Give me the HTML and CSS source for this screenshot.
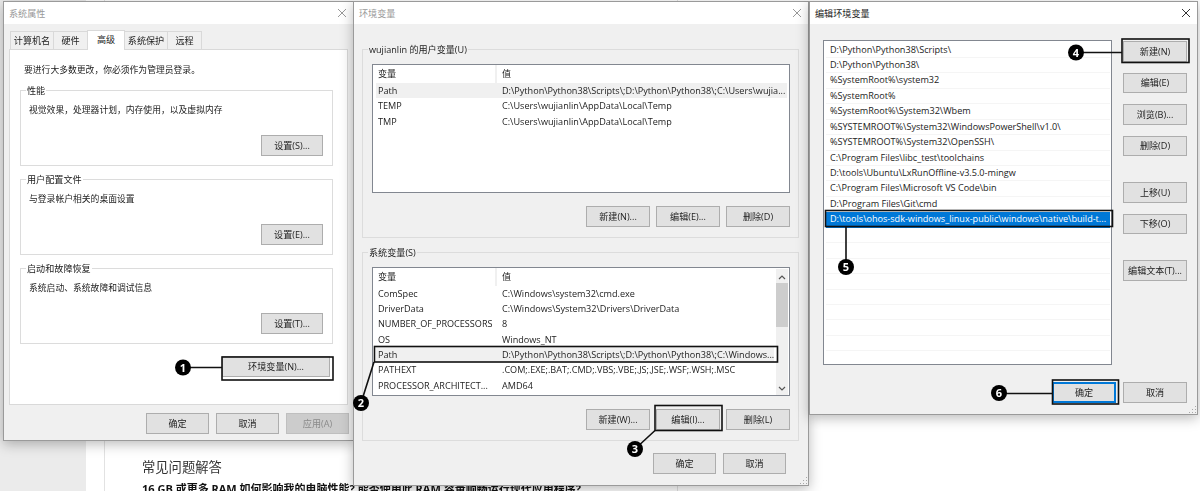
FILE: index.html
```html
<!DOCTYPE html>
<html lang="zh-CN">
<head>
<meta charset="utf-8">
<title>环境变量设置</title>
<link rel="stylesheet" href="styles.css">
</head>
<body>
<div class="desk">
  <div class="page">
    <div class="rail"></div>
    <div class="gutter"></div>
    <main class="article">
      <h2 class="faq-title">常见问题解答</h2>
      <p class="faq-q">16 GB 或更多 RAM 如何影响我的电脑性能? 能否使用此 RAM 容量顺畅运行现代应用程序?</p>
    </main>
    <div class="article-end"></div>
  </div>

  <section class="win win-sys">
    <header class="titlebar inactive"><span>系统属性</span><svg class="close" viewBox="0 0 10 10"><path d="M1 1l8 8M9 1l-8 8"/></svg></header>
    <div class="win-body">
      <nav class="tabs">
        <span class="tab t1">计算机名</span><span class="tab t2">硬件</span><span class="tab active">高级</span><span class="tab t4">系统保护</span><span class="tab t5">远程</span>
      </nav>
      <div class="tabpanel">
        <p class="notice">要进行大多数更改，你必须作为管理员登录。</p>
        <div class="group g-sys">
          <span class="legend white">性能</span>
          <p class="group-text">视觉效果，处理器计划，内存使用，以及虚拟内存</p>
          <button class="btn b-set">设置(S)...</button>
        </div>
        <div class="group g-sys">
          <span class="legend white">用户配置文件</span>
          <p class="group-text">与登录帐户相关的桌面设置</p>
          <button class="btn b-set">设置(E)...</button>
        </div>
        <div class="group g-sys">
          <span class="legend white">启动和故障恢复</span>
          <p class="group-text">系统启动、系统故障和调试信息</p>
          <button class="btn b-set">设置(T)...</button>
        </div>
        <button class="btn b-env">环境变量(N)...</button>
      </div>
      <footer class="sys-foot">
        <button class="btn b-std">确定</button>
        <button class="btn b-std">取消</button>
        <button class="btn b-std disabled">应用(A)</button>
      </footer>
    </div>
  </section>

  <section class="win win-env">
    <header class="titlebar inactive"><span>环境变量</span><svg class="close" viewBox="0 0 10 10"><path d="M1 1l8 8M9 1l-8 8"/></svg></header>
    <div class="win-body env-body">
      <div class="group g-env first">
        <span class="legend">wujianlin 的用户变量(U)</span>
        <div class="vars">
          <div class="vars-head"><span class="c1">变量</span><span class="c2">值</span></div>
          <div class="row hl"><span class="c1">Path</span><span class="c2">D:\Python\Python38\Scripts\;D:\Python\Python38\;C:\Users\wujia...</span></div>
          <div class="row"><span class="c1">TEMP</span><span class="c2">C:\Users\wujianlin\AppData\Local\Temp</span></div>
          <div class="row"><span class="c1">TMP</span><span class="c2">C:\Users\wujianlin\AppData\Local\Temp</span></div>
        </div>
        <div class="btn-row">
          <button class="btn b-mid">新建(N)...</button>
          <button class="btn b-mid">编辑(E)...</button>
          <button class="btn b-mid">删除(D)</button>
        </div>
      </div>
      <div class="group g-env">
        <span class="legend">系统变量(S)</span>
        <div class="vars">
          <div class="vars-main">
            <div class="vars-head"><span class="c1">变量</span><span class="c2">值</span></div>
            <div class="row"><span class="c1">ComSpec</span><span class="c2">C:\Windows\system32\cmd.exe</span></div>
            <div class="row"><span class="c1">DriverData</span><span class="c2">C:\Windows\System32\Drivers\DriverData</span></div>
            <div class="row"><span class="c1">NUMBER_OF_PROCESSORS</span><span class="c2">8</span></div>
            <div class="row"><span class="c1">OS</span><span class="c2">Windows_NT</span></div>
            <div class="row hl"><span class="c1">Path</span><span class="c2">D:\Python\Python38\Scripts\;D:\Python\Python38\;C:\Windows...</span></div>
            <div class="row"><span class="c1">PATHEXT</span><span class="c2">.COM;.EXE;.BAT;.CMD;.VBS;.VBE;.JS;.JSE;.WSF;.WSH;.MSC</span></div>
            <div class="row"><span class="c1">PROCESSOR_ARCHITECT...</span><span class="c2">AMD64</span></div>
          </div>
          <div class="scrollbar">
            <svg class="arrow" viewBox="0 0 8 5"><path d="M1 4l3-3 3 3"/></svg>
            <div class="thumb"></div>
            <svg class="arrow down" viewBox="0 0 8 5"><path d="M1 1l3 3 3-3"/></svg>
          </div>
        </div>
        <div class="btn-row">
          <button class="btn b-mid">新建(W)...</button>
          <button class="btn b-mid">编辑(I)...</button>
          <button class="btn b-mid">删除(L)</button>
        </div>
      </div>
      <footer class="env-foot">
        <button class="btn b-std">确定</button>
        <button class="btn b-std">取消</button>
      </footer>
      <div class="grip"></div>
    </div>
  </section>

  <section class="win win-edit">
    <header class="titlebar"><span>编辑环境变量</span><svg class="close dark" viewBox="0 0 10 10"><path d="M1 1l8 8M9 1l-8 8"/></svg></header>
    <div class="win-body edit-body">
      <div class="edit-main">
        <div class="pathlist">
          <div class="pitem">D:\Python\Python38\Scripts\</div>
          <div class="pitem">D:\Python\Python38\</div>
          <div class="pitem">%SystemRoot%\system32</div>
          <div class="pitem">%SystemRoot%</div>
          <div class="pitem">%SystemRoot%\System32\Wbem</div>
          <div class="pitem">%SYSTEMROOT%\System32\WindowsPowerShell\v1.0\</div>
          <div class="pitem">%SYSTEMROOT%\System32\OpenSSH\</div>
          <div class="pitem">C:\Program Files\libc_test\toolchains</div>
          <div class="pitem">D:\tools\Ubuntu\LxRunOffline-v3.5.0-mingw</div>
          <div class="pitem">C:\Program Files\Microsoft VS Code\bin</div>
          <div class="pitem">D:\Program Files\Git\cmd</div>
          <div class="pitem sel">D:\tools\ohos-sdk-windows_linux-public\windows\native\build-t...</div>
          <div class="pitem"></div><div class="pitem"></div><div class="pitem"></div><div class="pitem"></div><div class="pitem"></div><div class="pitem"></div><div class="pitem"></div><div class="pitem"></div>
        </div>
        <div class="side">
          <button class="btn b-side">新建(N)</button>
          <button class="btn b-side">编辑(E)</button>
          <button class="btn b-side">浏览(B)...</button>
          <button class="btn b-side">删除(D)</button>
          <button class="btn b-side s-move">上移(U)</button>
          <button class="btn b-side">下移(O)</button>
          <button class="btn b-side s-text">编辑文本(T)...</button>
        </div>
      </div>
      <footer class="edit-foot">
        <button class="btn b-std primary">确定</button>
        <button class="btn b-std">取消</button>
      </footer>
      <div class="grip"></div>
    </div>
  </section>

  <svg class="marks" viewBox="0 0 1200 491">
    <rect class="box" x="222" y="357" width="111" height="23"/>
    <rect class="box" x="374.5" y="346.5" width="403" height="15.5"/>
    <rect class="box" x="655" y="405.5" width="67" height="25"/>
    <rect class="box" x="1122" y="39" width="67" height="23.5"/>
    <rect class="box" x="825.5" y="210.5" width="287" height="16"/>
    <rect class="box" x="1052.5" y="380" width="66" height="24"/>
    <path class="lead" d="M183 367.5H222M374 362L361 403M655 430.5L635 449M1076 52.5H1122M846 227V267M999 393.5H1052"/>
    <g class="dot"><circle cx="183" cy="367.5" r="8"/><text x="183" y="371.5">1</text></g>
    <g class="dot"><circle cx="361" cy="403" r="8"/><text x="361" y="407">2</text></g>
    <g class="dot"><circle cx="635" cy="449" r="8"/><text x="635" y="453">3</text></g>
    <g class="dot"><circle cx="1076" cy="52.5" r="8"/><text x="1076" y="56.5">4</text></g>
    <g class="dot"><circle cx="846" cy="267" r="8"/><text x="846" y="271">5</text></g>
    <g class="dot"><circle cx="999" cy="393" r="8"/><text x="999" y="397">6</text></g>
  </svg>
</div>
</body>
</html>
```

FILE: styles.css
```css
* { box-sizing: border-box; }
html, body { margin: 0; height: 491px; overflow: hidden; background: #fff; }
body, button { font-family: "Open Sans", "Noto Sans CJK SC", sans-serif; font-size: 9.1px; color: #222; }
p, h2 { margin: 0; }

.desk { position: relative; width: 1200px; height: 491px; overflow: hidden; filter: blur(0.35px); }

/* page behind the dialogs */
.page { display: flex; height: 491px; }
.rail { width: 86px; background: #ebebeb; }
.gutter { width: 18px; background: #fff; }
.article { width: 574px; border-left: 1px solid #e2e2e2; border-right: 1px solid #e2e2e2; padding: 457px 0 0 37px; overflow: hidden; white-space: nowrap; }
.faq-title { font-size: 13.3px; font-weight: 400; line-height: 20px; color: #333; }
.faq-q { font-size: 11px; font-weight: 700; line-height: 20px; margin-top: 2px; color: #111; }
.article-end { flex: 1; }

/* windows on the desktop */
.win { position: absolute; display: flex; flex-direction: column; background: #f0f0f0; border: 1px solid #9a9a9a; box-shadow: 0 3px 12px rgba(0,0,0,.28); }
.win-sys { left: 3px; top: 1px; width: 351px; height: 440px; }
.win-env { left: 353px; top: 1px; width: 456px; height: 485px; }
.win-edit { left: 809px; top: 1px; width: 389px; height: 414px; }

.titlebar { flex: none; height: 22px; background: #fff; display: flex; align-items: center; justify-content: space-between; padding: 0 6px 0 5px; color: #222; }
.titlebar.inactive { color: #999; }
.close { width: 10px; height: 10px; fill: none; stroke: #999; stroke-width: 1; }
.close.dark { stroke: #333; }

.win-body { flex: 1; display: flex; flex-direction: column; min-height: 0; position: relative; }

/* buttons */
.btn { display: block; margin: 0; padding: 0; background: #e1e1e1; border: 1px solid #adadad; color: #222; height: 20.5px; line-height: 17px; text-align: center; white-space: nowrap; }
.btn.disabled { background: #ccc; border-color: #bfbfbf; color: #8a8a8a; }
.btn.primary { border: 2px solid #0078d7; }

/* system properties */
.tabs { display: flex; align-items: flex-end; height: 25px; padding-left: 6px; flex: none; }
.tab { height: 18px; line-height: 18px; background: #f0f0f0; border: 1px solid #d9d9d9; border-bottom: 0; margin-right: -1px; text-align: center; }
.t1 { width: 44px; } .t2 { width: 35px; } .t4 { width: 44px; } .t5 { width: 35px; }
.tab.active { width: 38px; height: 20px; background: #fff; position: relative; z-index: 1; margin-bottom: -1px; line-height: 17px; }
.tabpanel { margin-left: 5px; width: 339px; height: 356px; background: #fff; border: 1px solid #d9d9d9; padding: 13px 10px 0 10px; flex: none; }
.notice { padding-left: 4px; height: 27px; line-height: 14px; font-size: 8.8px; }

.group { position: relative; border: 1px solid #dcdcdc; }
.legend { position: absolute; left: 5px; top: -6px; padding: 0 1px; line-height: 12px; background: #f0f0f0; }
.legend.white { background: #fff; }
.g-sys { width: 313px; height: 76px; margin-bottom: 13px; padding: 12px 9px 0 8px; }
.group-text { height: 32px; line-height: 14px; font-size: 8.8px; }
.b-set { width: 62px; height: 21px; margin-left: auto; }
.b-env { width: 108px; margin: -1px 0 0 202px; height: 21px; }
.sys-foot { display: flex; gap: 7px; justify-content: flex-end; padding: 8px 4px 0 0; }
.b-std { width: 63px; }

/* environment variables */
.env-body { padding: 25px 9px 0 8px; }
.g-env { height: 189px; padding: 14px 8px 0 9px; }
.g-env.first { margin-bottom: 14px; }
.vars { display: flex; height: 129px; background: #fff; border: 1px solid #828790; padding: 0 0 0 3px; }
.first .vars { display: block; }
.vars-main { flex: 1; min-width: 0; }
.vars-head { display: flex; height: 18px; line-height: 18px; }
.vars-main .vars-head { height: 17.5px; }
.vars-head .c1 { border-right: 2px solid #f0f0f0; }
.row { display: flex; height: 15.4px; line-height: 15.4px; white-space: nowrap; margin-right: 2px; }
.row.hl { background: #f0f0f0; }
.c1 { width: 121px; padding-left: 2px; flex: none; overflow: hidden; }
.c2 { padding-left: 5px; }
.scrollbar { flex: none; width: 12px; margin: 1px 1px 0 0; background: #f0f0f0; display: flex; flex-direction: column; align-items: center; }
.arrow { width: 8px; height: 5px; margin: 6px 0 3px; fill: none; stroke: #555; stroke-width: 1.2; flex: none; }
.thumb { width: 100%; height: 44px; background: #cdcdcd; flex: none; }
.arrow.down { margin: auto 0 4px; }
.btn-row { display: flex; gap: 6px; justify-content: flex-end; margin-top: 13px; }
.b-mid { width: 64px; }
.env-foot { display: flex; gap: 7px; justify-content: flex-end; padding: 12px 13px 0 0; }
.grip { position: absolute; right: 1px; bottom: 1px; width: 8px; height: 8px; background-image: radial-gradient(circle, #a8a8a8 1px, transparent 1px); background-size: 3px 3px; clip-path: polygon(100% 0, 100% 100%, 0 100%); }

/* edit dialog */
.edit-body { padding: 16px 10px 0 13px; }
.edit-main { display: flex; gap: 11px; }
.pathlist { width: 289px; height: 325px; background: #fff; border: 1px solid #828790; padding: 1.5px 1px 0 2px; overflow: hidden; flex: none; }
.pitem { height: 15.45px; line-height: 14.5px; border-bottom: 1px solid #f5f5f5; padding-left: 4px; white-space: nowrap; }
.pitem.sel { background: #0078d7; color: #fff; border-bottom-color: #0078d7; }
.side { width: 64px; display: flex; flex-direction: column; gap: 11px; padding-top: 1px; }
.b-side { width: 64px; height: 20.5px; flex: none; }
.s-move { margin-top: 15px; }
.s-text { margin-top: 15px; padding: 0; }
.edit-foot { display: flex; gap: 7px; justify-content: flex-end; padding: 17px 0 0 0; }
.edit-foot .b-std { width: 64px; }

/* annotations */
.marks { position: absolute; left: 0; top: 0; width: 1200px; height: 491px; pointer-events: none; }
.box { fill: none; stroke: #111; stroke-width: 1.6; }
.lead { fill: none; stroke: #111; stroke-width: 1.6; }
.dot circle { fill: #000; }
.dot text { fill: #fff; font-family: "Open Sans", sans-serif; font-size: 11px; font-weight: 700; text-anchor: middle; }
```
